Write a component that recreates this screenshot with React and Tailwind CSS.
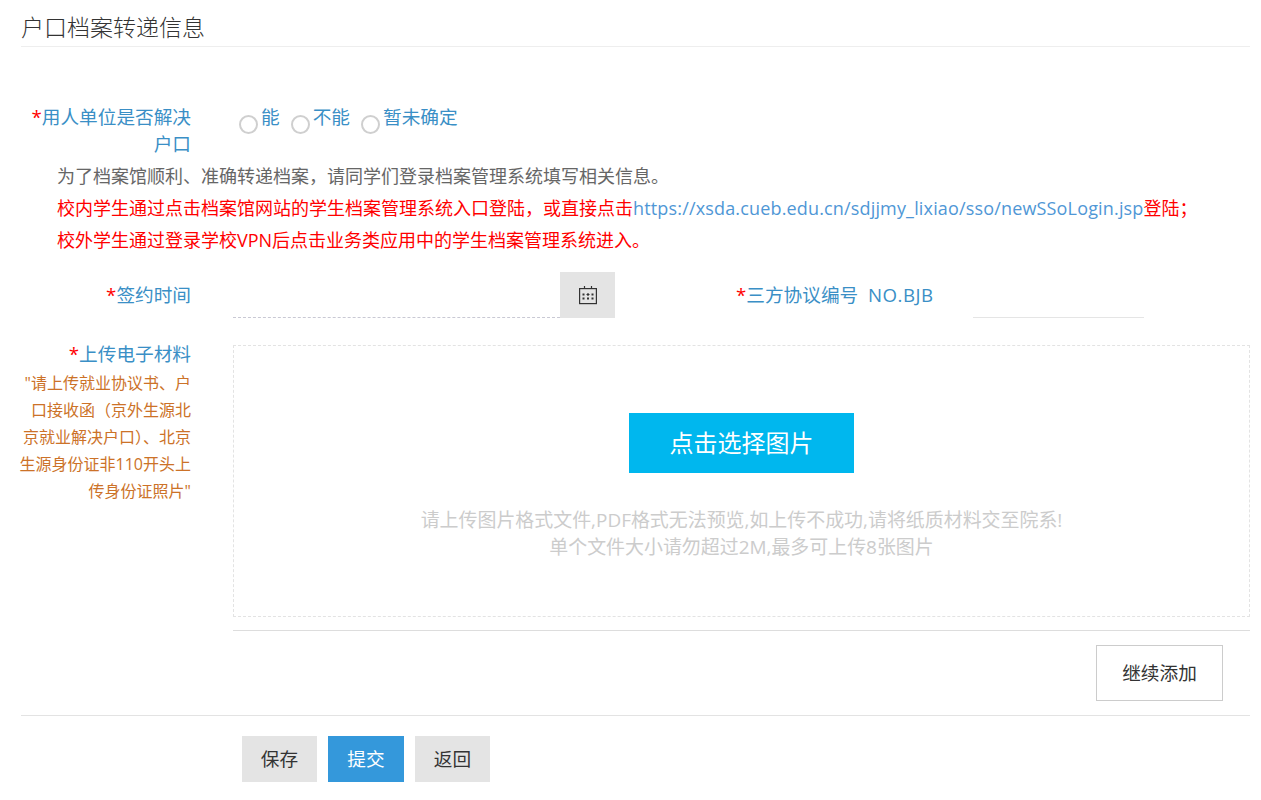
const labelClass = "w-[170px] shrink-0 text-right text-[18.67px] leading-[27px] text-[#3a8fc6]";

const Required = () => <span className="text-[#f00]">*</span>;

const Radio = ({ label }) => (
  <label className="flex items-start">
    <span className="mt-[12px] block h-[19px] w-[19px] rounded-full border-2 border-[#cfcfcf] bg-white" />
    <span className="ml-[3px] text-[18.67px] leading-[27px] text-[#3a8fc6]">{label}</span>
  </label>
);

const CalendarIcon = () => (
  <svg width="20" height="20" viewBox="0 0 20 20" fill="none" stroke="#333" strokeWidth="1.2">
    <rect x="1.6" y="3.6" width="16.8" height="15" />
    <path d="M6.5 1v3M13.5 1v3" />
    <path d="M4.5 8.5h2v2h-2zM13.5 8.5h2v2h-2zM4.5 12.5h2v2h-2zM9 12.5h2v2H9zM13.5 12.5h2v2h-2z" fill="#333" stroke="none" />
    <path d="M8.5 9.5h3M10 8v3" />
  </svg>
);

const App = () => {
  return (
    <div
      className="w-[1261px] h-[800px] overflow-hidden bg-white pl-[21px] pr-[11px]"
      style={{ fontFamily: '"Open Sans", "Noto Sans CJK SC", sans-serif' }}
    >
      <div className="h-[47px] border-b border-[#eeeeee] pt-[12px] text-[23px] font-light leading-[30px] text-[#333]">
        户口档案转递信息
      </div>

      {/* 户口 */}
      <div className="mt-[56px] flex">
        <div className={labelClass}>
          <Required />
          用人单位是否解决户口
        </div>
        <div className="ml-[48px] flex gap-[11px]">
          <Radio label="能" />
          <Radio label="不能" />
          <Radio label="暂未确定" />
        </div>
      </div>

      {/* notice */}
      <div className="mt-[3px] pl-[36px] text-[18px] leading-[32px] text-[#666]">
        <p>{"为了档案馆顺利、准确转递档案\uFF0C请同学们登录档案管理系统填写相关信息。"}</p>
        <p className="whitespace-nowrap text-[#f00]">
          {"校内学生通过点击档案馆网站的学生档案管理系统入口登陆\uFF0C或直接点击"}
          <a className="tracking-[0.16px] text-[#4f97d6]">https://xsda.cueb.edu.cn/sdjjmy_lixiao/sso/newSSoLogin.jsp</a>
          {"登陆\uFF1B"}
        </p>
        <p className="text-[#f00]">校外学生通过登录学校VPN后点击业务类应用中的学生档案管理系统进入。</p>
      </div>

      {/* 签约时间 / 协议编号 */}
      <div className="mt-[16px] flex h-[46px] items-center">
        <div className={`${labelClass} -translate-y-px`}>
          <Required />
          签约时间
        </div>
        <div className="ml-[42px] h-[46px] w-[327px] border-b border-dashed border-[#c9c9d4]" />
        <button className="flex h-[46px] w-[55px] items-center justify-center bg-[#e4e4e4]">
          <CalendarIcon />
        </button>
        <div className="ml-[121px] w-[197px] -translate-y-px whitespace-nowrap text-[18.67px] leading-[27px] text-[#3a8fc6]">
          <Required />
          三方协议编号 &nbsp;<span className="tracking-[0.5px]">NO.BJB</span>
        </div>
        <div className="ml-[40px] h-[46px] w-[171px] border-b border-[#e5e5e5]" />
      </div>

      {/* upload */}
      <div className="mt-[27px] flex">
        <div className="w-[170px] shrink-0 text-right">
          <div className="pb-[7px] text-[18.67px] leading-[18px] text-[#3a8fc6]">
            <Required />
            上传电子材料
          </div>
          <p className="-ml-[3px] text-[16px] leading-[27px] text-[#cc7228]">
            {'"请上传就业协议书、户口接收函\uFF08京外生源北京就业解决户口\uFF09、北京生源身份证非110开头上传身份证照片"'}
          </p>
        </div>
        <div className="ml-[42px] flex h-[272px] w-[1017px] flex-col items-center border border-dashed border-[#e3e3e3] pt-[67px]">
          <button className="h-[60px] w-[225px] bg-[#00b7ee] text-[24px] text-white">点击选择图片</button>
          <p className="mt-[34px] text-center text-[18.95px] leading-[27px] text-[#cccccc]">
            请上传图片格式文件,PDF格式无法预览,如上传不成功,请将纸质材料交至院系!
            <br />
            单个文件大小请勿超过2M,最多可上传8张图片
          </p>
        </div>
      </div>

      <div className="ml-[212px] mt-[13px] border-t border-[#dddddd]" />
      <div className="mt-[14px] flex justify-end pr-[27px]">
        <button className="h-[56px] w-[127px] border border-[#cccccc] text-[18.67px] text-[#333]">继续添加</button>
      </div>

      <div className="mt-[14px] border-t border-[#e3e3e3]" />
      <div className="ml-[221px] mt-[20px] flex gap-[11px]">
        <button className="h-[46px] w-[75px] bg-[#e4e4e4] text-[18.67px] text-[#333]">保存</button>
        <button className="h-[46px] w-[76px] bg-[#3498db] text-[18.67px] text-white">提交</button>
        <button className="h-[46px] w-[75px] bg-[#e4e4e4] text-[18.67px] text-[#333]">返回</button>
      </div>
    </div>
  );
};

export default App;
